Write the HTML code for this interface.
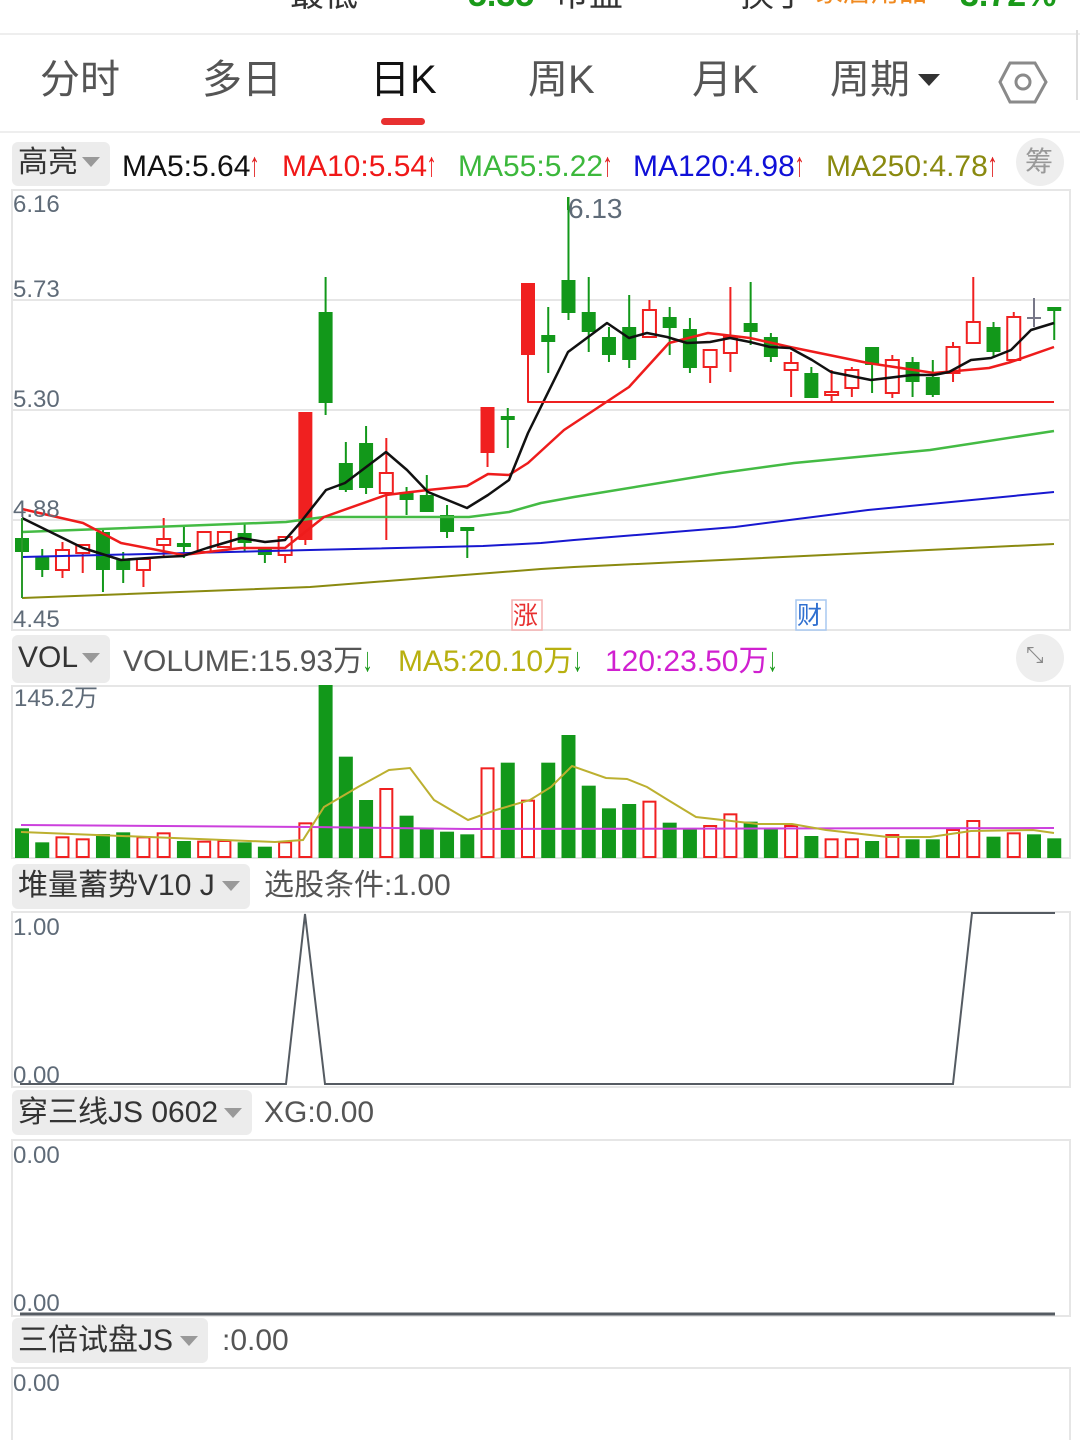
<!DOCTYPE html>
<html><head><meta charset="utf-8">
<style>
*{margin:0;padding:0;box-sizing:border-box}
body{width:1080px;height:1440px;background:#fff;position:relative;overflow:hidden;font-family:"Liberation Sans","Noto Sans CJK SC",sans-serif}
.t{position:absolute;white-space:nowrap;line-height:1}
.pill{position:absolute;background:#ececec;border-radius:6px}
.tab{position:absolute;top:60px;font-size:40px;color:#555;line-height:1}
.ax{position:absolute;font-size:24px;color:#5f6b78;line-height:1}
.ar{font-size:34px;display:inline-block;transform:scaleX(0.6);margin-left:-4px}
svg{position:absolute;left:0;top:0}
</style></head><body>
<!-- clipped header -->
<div class="t" style="left:290px;top:-22px;font-size:34px;color:#333">最低</div>
<div class="t" style="left:468px;top:-22px;font-size:34px;color:#1a9a1a;font-weight:bold">5.35</div>
<div class="t" style="left:555px;top:-22px;font-size:34px;color:#333">市盈</div>
<div class="t" style="left:740px;top:-22px;font-size:34px;color:#333">换手</div>
<div class="t" style="left:815px;top:-22px;font-size:28px;color:#f08a20">家居用品</div>
<div class="t" style="left:960px;top:-22px;font-size:34px;color:#1a9a1a;font-weight:bold">3.72%</div>
<div style="position:absolute;left:0;top:33px;width:1080px;height:2px;background:#eee"></div>

<div class="tab" style="left:40px">分时</div>
<div class="tab" style="left:202px">多日</div>
<div class="tab" style="left:370px;color:#111">日K</div>
<div class="tab" style="left:528px">周K</div>
<div class="tab" style="left:692px">月K</div>
<div class="tab" style="left:830px">周期</div>
<div class="t" style="left:918px;top:74px;width:0;height:0;border-left:11px solid transparent;border-right:11px solid transparent;border-top:12px solid #333"></div>
<div style="position:absolute;left:381px;top:118px;width:44px;height:7px;border-radius:4px;background:#e83030"></div>
<div style="position:absolute;left:0;top:131px;width:1080px;height:2px;background:#eee"></div>

<!-- MA row -->
<div class="pill" style="left:12px;top:142px;width:98px;height:44px"></div>
<div class="t" style="left:18px;top:148px;font-size:30px;color:#333">高亮</div>
<div class="t" style="left:82px;top:157px;width:0;height:0;border-left:9px solid transparent;border-right:9px solid transparent;border-top:10px solid #999"></div>
<div class="t" style="left:122px;top:148px;font-size:30px;color:#111">MA5:5.64<span class="ar" style="color:#e02020">↑</span></div>
<div class="t" style="left:282px;top:148px;font-size:30px;color:#f01818">MA10:5.54<span class="ar">↑</span></div>
<div class="t" style="left:458px;top:148px;font-size:30px;color:#3cb83c">MA55:5.22<span class="ar" style="color:#e02020">↑</span></div>
<div class="t" style="left:633px;top:148px;font-size:30px;color:#1010d8">MA120:4.98<span class="ar" style="color:#e02020">↑</span></div>
<div class="t" style="left:826px;top:148px;font-size:30px;color:#8a8a10">MA250:4.78<span class="ar" style="color:#e02020">↑</span></div>
<div style="position:absolute;left:1016px;top:138px;width:48px;height:48px;border-radius:50%;background:#eee"></div>
<div class="t" style="left:1025px;top:148px;font-size:28px;color:#999">筹</div>

<!-- VOL row -->
<div class="pill" style="left:12px;top:635px;width:98px;height:48px"></div>
<div class="t" style="left:18px;top:643px;font-size:30px;color:#333">VOL</div>
<div class="t" style="left:82px;top:653px;width:0;height:0;border-left:9px solid transparent;border-right:9px solid transparent;border-top:10px solid #999"></div>
<div class="t" style="left:123px;top:643px;font-size:30px;color:#555">VOLUME:15.93万<span class="ar" style="color:#1a9a1a">↓</span></div>
<div class="t" style="left:398px;top:643px;font-size:30px;color:#b8b010">MA5:20.10万<span class="ar" style="color:#1a9a1a">↓</span></div>
<div class="t" style="left:605px;top:643px;font-size:30px;color:#d020d0">120:23.50万<span class="ar" style="color:#1a9a1a">↓</span></div>
<div style="position:absolute;left:1016px;top:634px;width:48px;height:48px;border-radius:50%;background:#eee"></div>
<div class="t" style="left:1026px;top:644px;font-size:22px;color:#888">⤡</div>

<!-- J row -->
<div class="pill" style="left:12px;top:864px;width:238px;height:45px"></div>
<div class="t" style="left:18px;top:871px;font-size:30px;color:#333">堆量蓄势V10 J</div>
<div class="t" style="left:222px;top:881px;width:0;height:0;border-left:9px solid transparent;border-right:9px solid transparent;border-top:10px solid #999"></div>
<div class="t" style="left:264px;top:871px;font-size:30px;color:#555">选股条件:1.00</div>

<div class="pill" style="left:12px;top:1090px;width:240px;height:45px"></div>
<div class="t" style="left:18px;top:1098px;font-size:30px;color:#333">穿三线JS 0602</div>
<div class="t" style="left:224px;top:1108px;width:0;height:0;border-left:9px solid transparent;border-right:9px solid transparent;border-top:10px solid #999"></div>
<div class="t" style="left:264px;top:1098px;font-size:30px;color:#555">XG:0.00</div>

<div class="pill" style="left:12px;top:1318px;width:196px;height:45px"></div>
<div class="t" style="left:18px;top:1326px;font-size:30px;color:#333">三倍试盘JS</div>
<div class="t" style="left:180px;top:1336px;width:0;height:0;border-left:9px solid transparent;border-right:9px solid transparent;border-top:10px solid #999"></div>
<div class="t" style="left:222px;top:1326px;font-size:30px;color:#555">:0.00</div>

<svg width="1080" height="1440" id="sv">
<g fill="none" stroke="#e6e6e6" stroke-width="2">
<rect x="12" y="190" width="1058" height="440"/>
<line x1="12" y1="300" x2="1070" y2="300"/><line x1="12" y1="410" x2="1070" y2="410"/><line x1="12" y1="520" x2="1070" y2="520"/>
<rect x="12" y="686" width="1058" height="172"/>
<rect x="12" y="912" width="1058" height="175"/>
<rect x="12" y="1140" width="1058" height="176"/>
<rect x="12" y="1368" width="1058" height="80"/>
<line x1="1077" y1="30" x2="1077" y2="100" stroke="#ddd"/>
</g>
<polygon points="1000,82 1010,63 1035,63 1046,82 1035,102 1010,102" fill="none" stroke="#8a8a8a" stroke-width="3"/>
<circle cx="1023" cy="82" r="7" fill="none" stroke="#8a8a8a" stroke-width="3"/>
<g id="cand"></g>
<g fill="none" stroke-width="2.5" stroke-linejoin="round">
<polyline stroke="#8a8a10" stroke-width="2" points="22,598 310,587 541,569 574,567 1054,544"/>
<polyline stroke="#1818d0" stroke-width="2" points="22,557 310,550 483,546 541,543 574,540 735,527 868,510 1054,492"/>
<polyline stroke="#44bb44" points="22,532 286,522 324,517 469,517 509,512 541,503 574,497 721,473 794,463 930,450 1054,431"/>
<polyline stroke="#ee1c1c" points="22,509 83,523 121,543 183,555 241,548 285,548 324,517 386,495 428,490 467,486 488,474 509,475 528,463 564,430 629,387 669,343 708,333 750,338 790,347 868,363 934,373 989,368 1011,362 1054,347"/>
<polyline stroke="#111" points="22,518 83,548 121,560 162,557 183,556 207,548 241,538 265,542 285,540 300,523 326,490 345,483 386,452 407,470 428,492 467,508 488,495 509,480 528,433 568,352 607,323 629,338 647,333 667,337 687,343 710,342 730,338 750,342 770,347 790,348 812,360 831,372 871,380 912,375 934,375 949,372 971,360 991,358 1011,350 1031,330 1054,323"/>
<line x1="22" y1="518" x2="22" y2="598" stroke="#2a9a2a" stroke-width="2"/>
<polyline stroke="#ee2020" stroke-width="2" points="528,355 528,402 1054,402"/>
</g>
<g id="vol"></g>
<g fill="none" stroke-width="2">
<polyline stroke="#cc40dd" points="21,825 310,827 468,829 1054,828"/>
<polyline stroke="#bcb030" points="21,832 275,842 303,840 324,807 358,787 389,770 410,768 434,800 468,820 496,810 530,800 551,787 572,766 606,778 627,779 647,787 668,800 696,817 758,824 792,824 826,830 888,837 930,837 971,831 1033,830 1054,833"/>
<polyline stroke="#555b62" points="20,1084 286,1084 305,914 325,1084 953,1084 972,913 1055,913"/>
<line x1="20" y1="1314" x2="1055" y2="1314" stroke="#555b62" stroke-width="3"/>
</g>
<rect x="512" y="600" width="30" height="30" fill="#fff" stroke="#f5b0b0" stroke-width="1.5"/>
<text x="513" y="624" font-size="25" fill="#e83030" font-family="Noto Sans CJK SC,sans-serif">涨</text>
<rect x="796" y="600" width="30" height="30" fill="#fff" stroke="#a8c8f0" stroke-width="1.5"/>
<text x="797" y="624" font-size="25" fill="#3070d0" font-family="Noto Sans CJK SC,sans-serif">财</text>
<line x1="568" y1="197" x2="568" y2="210" stroke="#1a9a1a" stroke-width="2"/>
</svg>
<div class="ax" style="left:13px;top:193px">6.16</div>
<div class="ax" style="left:13px;top:278px">5.73</div>
<div class="ax" style="left:13px;top:388px">5.30</div>
<div class="ax" style="left:13px;top:498px">4.88</div>
<div class="ax" style="left:13px;top:608px">4.45</div>
<div class="ax" style="left:568px;top:195px;font-size:28px">6.13</div>
<div class="ax" style="left:14px;top:687px">145.2万</div>
<div class="ax" style="left:13px;top:916px">1.00</div>
<div class="ax" style="left:13px;top:1064px">0.00</div>
<div class="ax" style="left:13px;top:1144px">0.00</div>
<div class="ax" style="left:13px;top:1292px">0.00</div>
<div class="ax" style="left:13px;top:1372px">0.00</div>
<script>
var G="#12981a",R="#f02020";
var C=[["G",538,552,538,552],["G",557,570,549,577],["R",550,570,542,578],["R",545,553,545,573],["G",532,570,530,592],["G",560,570,552,583],["R",559,570,559,587],["R",539,545,518,557],["G",543,547,527,558],["R",532,552,532,552],["R",532,547,532,547],["G",533,543,523,552],["G",549,555,549,563],["R",537,555,537,563],["S",412,540,412,545],["G",312,403,277,415],["G",463,490,442,492],["G",443,488,426,494],["R",473,493,438,540],["G",492,500,487,515],["G",495,512,475,512],["G",515,532,505,538],["G",527,531,527,558],["S",407,453,407,467],["G",416,420,408,448],["S",283,355,283,355],["G",335,342,307,373],["G",280,313,197,320],["G",312,332,277,352],["G",337,355,327,362],["G",327,360,295,368],["R",310,337,300,337],["G",317,328,307,355],["G",329,368,318,373],["R",350,367,350,383],["R",337,353,287,372],["G",323,332,282,345],["G",337,357,333,362],["R",363,370,352,397],["G",373,398,367,398],["R",392,395,370,403],["R",370,388,367,397],["G",347,365,347,393],["R",360,393,355,398],["G",362,382,357,397],["G",377,395,360,397],["R",347,373,342,382],["R",322,343,277,343],["G",327,352,322,357],["R",317,360,312,362],["X",318,319,298,327],["G",307,311,307,340]];
var V=[["G",595],["G",637],["R",622],["R",628],["G",612],["G",607],["R",622],["R",610],["G",633],["R",635],["R",633],["G",637],["G",650],["R",637],["R",580],["G",165],["G",380],["G",510],["R",477],["G",557],["G",593],["G",605],["G",613],["R",415],["G",398],["R",512],["G",398],["G",315],["G",467],["G",535],["G",522],["R",515],["G",578],["G",598],["R",588],["R",553],["G",575],["G",598],["R",588],["G",618],["R",628],["R",628],["G",633],["R",615],["G",628],["G",628],["R",600],["R",573],["G",620],["R",610],["G",613],["G",625]];
var s="";
C.forEach(function(c,i){var x=22+i*20.24,t=c[0];var col=t=="G"?G:t=="X"?"#778":R;
s+='<line x1="'+x+'" y1="'+c[3]+'" x2="'+x+'" y2="'+c[4]+'" stroke="'+col+'" stroke-width="2"/>';
var h=Math.max(c[2]-c[1],2);
if(t=="G"||t=="S")s+='<rect x="'+(x-7)+'" y="'+c[1]+'" width="14" height="'+h+'" fill="'+col+'"/>';
else if(t=="X")s+='<line x1="'+(x-7)+'" y1="'+c[1]+'" x2="'+(x+7)+'" y2="'+c[1]+'" stroke="'+col+'" stroke-width="2"/>';
else s+='<rect x="'+(x-6.5)+'" y="'+c[1]+'" width="13" height="'+h+'" fill="#fff" stroke="'+col+'" stroke-width="2"/>';});
document.getElementById("cand").innerHTML=s;s="";
V.forEach(function(v,i){var x=22+i*20.24,top=630+v[1]/3,h=858-top;
if(v[0]=="G")s+='<rect x="'+(x-7)+'" y="'+top+'" width="14" height="'+h+'" fill="'+G+'"/>';
else s+='<rect x="'+(x-6)+'" y="'+top+'" width="12" height="'+(h-1)+'" fill="#fff" stroke="'+R+'" stroke-width="2"/>';});
document.getElementById("vol").innerHTML=s;
</script>
</body></html>
